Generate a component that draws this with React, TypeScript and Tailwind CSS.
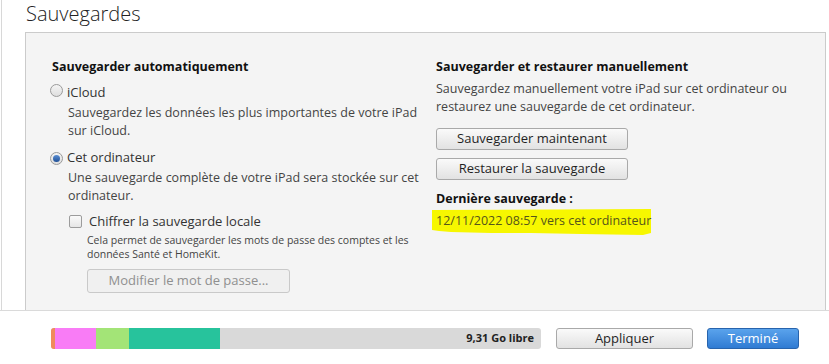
import React from "react";

function Radio({ checked }: { checked?: boolean }) {
  return (
    <span className="relative inline-flex h-[13px] w-[13px] shrink-0 items-center justify-center rounded-full border border-[#9a9a9a] bg-gradient-to-b from-[#f4f4f4] to-[#dedede]">
      {checked && (
        <span className="h-[7px] w-[7px] rounded-full bg-gradient-to-b from-[#5b8fd3] to-[#1f4f96]" />
      )}
    </span>
  );
}

function Btn({ children, className = "", disabled }: { children: React.ReactNode; className?: string; disabled?: boolean }) {
  return (
    <div
      className={
        "flex items-center justify-center rounded-[3px] border text-[13px] " +
        (disabled
          ? "border-[#c9c9c9] bg-[#f0f0f0] text-[#8f8f8f] "
          : "border-[#a9a9a9] bg-gradient-to-b from-[#fafafa] to-[#e2e2e2] text-[#1f1f1f] ") +
        className
      }
    >
      {children}
    </div>
  );
}

export default function App() {
  return (
    <div className="h-[364px] w-[829px] overflow-hidden bg-white font-['Open_Sans',sans-serif] text-[#333]">
      {/* top area */}
      <div className="h-[311px] border-b border-[#dadada]">
        <div className="ml-[1px] flex h-full flex-col border-l border-[#d8d8d8] pl-[23px]">
          <div className="h-[32px] pl-[1px] text-[20px] font-light leading-[27px] text-[#222]">Sauvegardes</div>
          <div className="grid w-[801px] flex-1 grid-cols-[384px_1fr] border-x border-t border-[#cbcbcb] bg-[#f4f4f4] pl-[26px] pt-[25px]">
            {/* left column */}
            <div className="flex flex-col">
              <div className="h-[18px] text-[12.5px] font-bold leading-[18px] text-[#111]">Sauvegarder automatiquement</div>
              <div className="mt-[7px] flex h-[18px] items-center gap-[4px] text-[13px] leading-[18px]">
                <span className="-ml-[2px]"><Radio /></span>
                <span>iCloud</span>
              </div>
              <div className="mt-[3px] pl-[16px] text-[12.5px] leading-[18px] text-[#444]">
                Sauvegardez les données les plus importantes de votre iPad
                <br />
                sur iCloud.
              </div>
              <div className="mt-[8px] flex h-[18px] items-center gap-[4px] text-[13px] leading-[18px]">
                <span className="-ml-[2px]"><Radio checked /></span>
                <span>Cet ordinateur</span>
              </div>
              <div className="mt-[3px] pl-[16px] text-[12.5px] leading-[18px] text-[#444]">
                Une sauvegarde complète de votre iPad sera stockée sur cet
                <br />
                ordinateur.
              </div>
              <div className="mt-[7px] flex h-[18px] items-center pl-[17px] text-[13px] leading-[18px]">
                <span className="h-[13px] w-[13px] rounded-[2px] border border-[#9c9c9c] bg-gradient-to-b from-[#fafafa] to-[#e6e6e6]" />
                <span className="ml-[7px]">Chiffrer la sauvegarde locale</span>
              </div>
              <div className="mt-[3px] pl-[35px] text-[10.5px] leading-[14px] text-[#444]">
                Cela permet de sauvegarder les mots de passe des comptes et les
                <br />
                données Santé et HomeKit.
              </div>
              <div className="mt-[8px] pl-[35px]">
                <Btn disabled className="h-[24px] w-[203px]">Modifier le mot de passe...</Btn>
              </div>
            </div>
            {/* right column */}
            <div className="flex flex-col">
              <div className="h-[18px] text-[12.5px] font-bold leading-[18px] text-[#111]">Sauvegarder et restaurer manuellement</div>
              <div className="mt-[4px] text-[12.5px] leading-[18px] text-[#444]">
                Sauvegardez manuellement votre iPad sur cet ordinateur ou
                <br />
                restaurez une sauvegarde de cet ordinateur.
              </div>
              <Btn className="mt-[12px] h-[22px] w-[192px]">Sauvegarder maintenant</Btn>
              <Btn className="mt-[8px] h-[22px] w-[192px]">Restaurer la sauvegarde</Btn>
              <div className="mt-[10px] h-[18px] text-[12.5px] font-bold leading-[18px] text-[#111]">Dernière sauvegarde :</div>
              <div className="relative mt-[4px] h-[18px] text-[12.5px] leading-[18px]">
                <svg className="absolute left-[-5px] top-[-4px]" width="224" height="28" viewBox="0 0 224 28">
                  <path
                    d="M1 2 L220 1 L220 25 L212 27 L150 26 L100 25 L60 25 L20 24 L8 23 L1 22 Z"
                    fill="#f7f700"
                  />
                </svg>
                <span className="relative text-[#55551a]">12/11/2022 08:57 vers cet ordinateur</span>
              </div>
            </div>
          </div>
        </div>
      </div>
      {/* bottom bar */}
      <div className="flex h-[53px] items-start pt-[17px]">
        <div className="ml-[51px] flex h-[21px] w-[490px] overflow-hidden rounded-[3px] bg-[#d9d9d9]">
          <div className="w-[4px] bg-[#f08a5d]" />
          <div className="w-[41px] bg-[#f97cf6]" />
          <div className="w-[33px] bg-[#a3e477]" />
          <div className="w-[91px] bg-[#27c39c]" />
          <div className="flex flex-1 items-center justify-end pr-[7px] text-[11px] font-bold text-[#222]">9,31 Go libre</div>
        </div>
        <Btn className="ml-[15px] h-[21px] w-[137px]">Appliquer</Btn>
        <div className="ml-[14px] flex h-[21px] w-[92px] items-center justify-center rounded-[3px] border border-[#2864ad] bg-gradient-to-b from-[#5aa3ec] to-[#2f7bd3] text-[13px] text-white">
          Terminé
        </div>
      </div>
    </div>
  );
}
